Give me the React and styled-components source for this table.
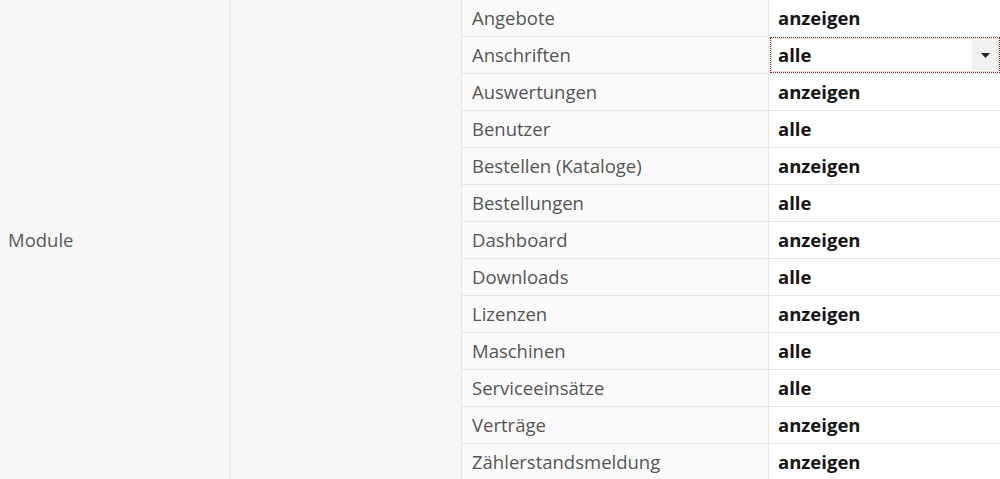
import React from "react";
import styled, { createGlobalStyle } from "styled-components";

const GlobalStyle = createGlobalStyle`
  html, body {
    margin: 0;
    padding: 0;
    background: #f7f7f7;
    overflow: hidden;
  }
  body {
    font-family: "Open Sans", "Noto Sans", sans-serif;
  }
`;

const rows = [
  { label: "Angebote", value: "anzeigen" },
  { label: "Anschriften", value: "alle", select: true },
  { label: "Auswertungen", value: "anzeigen" },
  { label: "Benutzer", value: "alle" },
  { label: "Bestellen (Kataloge)", value: "anzeigen" },
  { label: "Bestellungen", value: "alle" },
  { label: "Dashboard", value: "anzeigen" },
  { label: "Downloads", value: "alle" },
  { label: "Lizenzen", value: "anzeigen" },
  { label: "Maschinen", value: "alle" },
  { label: "Serviceeinsätze", value: "alle" },
  { label: "Verträge", value: "anzeigen" },
  { label: "Zählerstandsmeldung", value: "anzeigen" },
];

const Wrapper = styled.div`
  display: grid;
  grid-template-columns: 231px 231px 1fr;
  width: 1000px;
  height: 479px;
  overflow: hidden;
  background: #f7f7f7;
`;

const GroupCell = styled.div`
  display: flex;
  align-items: center;
  padding: 0 0 2px 8px;
  font-size: 18.5px;
  color: #5a5a5a;
  border-right: 2px solid #ebebeb;
`;

const EmptyCell = styled.div`
  border-right: 1px solid #e4e4e4;
`;

const PermTable = styled.div`
  display: flex;
  flex-direction: column;
`;

const Row = styled.div`
  display: grid;
  grid-template-columns: 307px 1fr;
  height: 36px;
  flex: 0 0 36px;
  border-bottom: 1px solid #e6e6e6;
`;

const Label = styled.div`
  display: flex;
  align-items: center;
  padding: 0 0 2px 10px;
  background: #fafafa;
  border-right: 1px solid #e6e6e6;
  font-size: 18.5px;
  color: #555;
  white-space: nowrap;
`;

const Value = styled.div`
  display: flex;
  align-items: center;
  padding: 0 0 2px 9px;
  background: #fff;
  font-size: 18.5px;
  font-weight: 700;
  color: #151515;
  white-space: nowrap;
`;

const Select = styled.div`
  flex: 1;
  align-self: stretch;
  display: flex;
  align-items: center;
  margin: 0 0 -2px -8px;
  padding: 0 0 2px 7px;
  border: 1px dotted #5b3328;
  box-shadow: inset 0 0 0 1px #f4d9cf;
`;

const SelectText = styled.span`
  flex: 1;
`;

const Arrow = styled.span`
  display: flex;
  align-items: center;
  justify-content: center;
  width: 26px;
  align-self: stretch;
  margin: 2px 1px 0 0;
  background: #f1f1f1;
  svg {
    display: block;
  }
`;

export default function App() {
  return (
    <>
      <GlobalStyle />
      <Wrapper>
        <GroupCell>Module</GroupCell>
        <EmptyCell />
        <PermTable>
          {rows.map((r) => (
            <Row key={r.label}>
              <Label>{r.label}</Label>
              <Value>
                {r.select ? (
                  <Select>
                    <SelectText>{r.value}</SelectText>
                    <Arrow>
                      <svg width="9" height="5" viewBox="0 0 9 5">
                        <path d="M0 0h9L4.5 5z" fill="#222" />
                      </svg>
                    </Arrow>
                  </Select>
                ) : (
                  r.value
                )}
              </Value>
            </Row>
          ))}
        </PermTable>
      </Wrapper>
    </>
  );
}
